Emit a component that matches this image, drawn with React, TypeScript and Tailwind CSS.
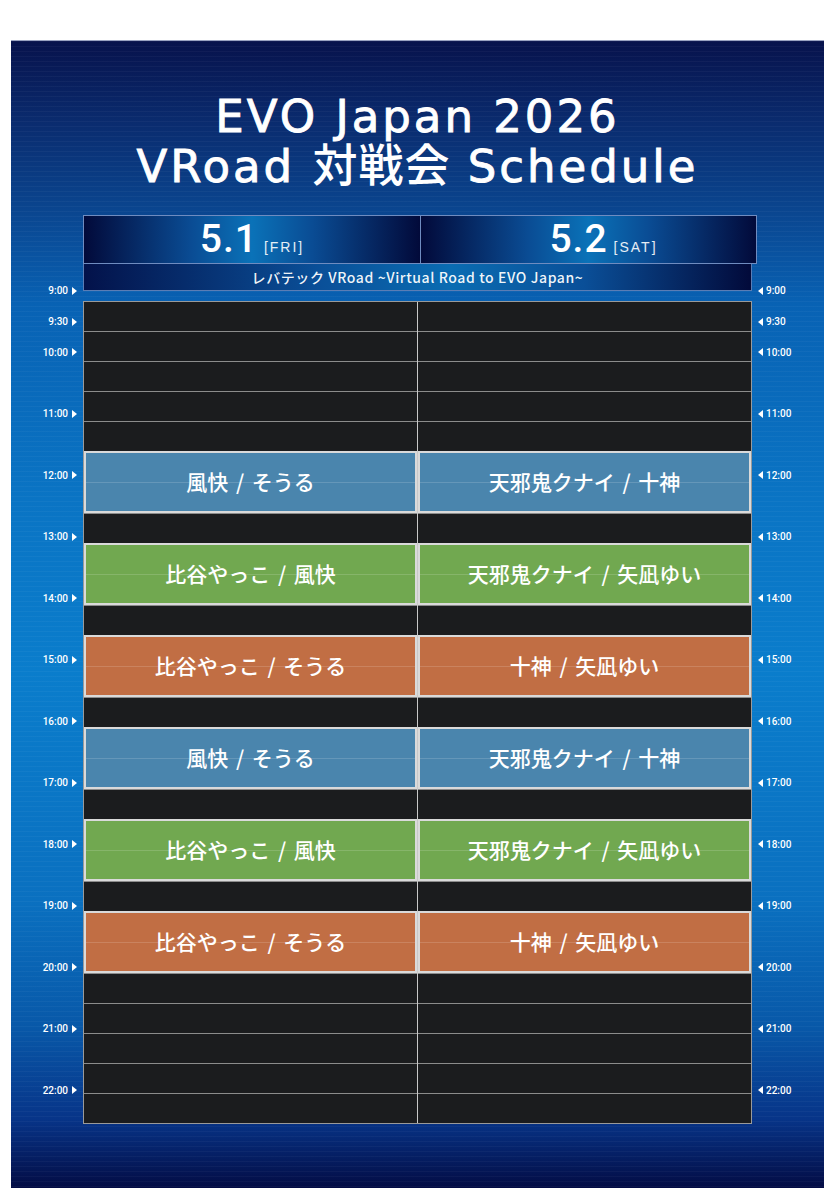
type Slot = { kind: "empty" } | { kind: "event"; tone: "blue" | "green" | "orange"; label: string };

const empty: Slot = { kind: "empty" };
const ev = (tone: "blue" | "green" | "orange", label: string): Slot => ({ kind: "event", tone, label });

const FRIDAY: Slot[] = [
  empty, empty, empty, empty, empty,
  ev("blue", "風快 / そうる"), empty,
  ev("green", "比谷やっこ / 風快"), empty,
  ev("orange", "比谷やっこ / そうる"), empty,
  ev("blue", "風快 / そうる"), empty,
  ev("green", "比谷やっこ / 風快"), empty,
  ev("orange", "比谷やっこ / そうる"),
  empty, empty, empty, empty, empty,
];

const SATURDAY: Slot[] = [
  empty, empty, empty, empty, empty,
  ev("blue", "天邪鬼クナイ / 十神"), empty,
  ev("green", "天邪鬼クナイ / 矢凪ゆい"), empty,
  ev("orange", "十神 / 矢凪ゆい"), empty,
  ev("blue", "天邪鬼クナイ / 十神"), empty,
  ev("green", "天邪鬼クナイ / 矢凪ゆい"), empty,
  ev("orange", "十神 / 矢凪ゆい"),
  empty, empty, empty, empty, empty,
];

const TONE_BG = {
  blue: "bg-[#4a85ad]",
  green: "bg-[#71a850]",
  orange: "bg-[#c16e44]",
};

// half-hour marks 9:00 .. 22:00, only 9:30 gets a half-hour label
const MARKS = Array.from({ length: 27 }, (_, i) => {
  if (i === 1) return "9:30";
  if (i % 2 === 1) return "";
  return `${9 + i / 2}:00`;
});

const JP = "font-['Noto_Sans_CJK_JP',sans-serif]";

function TimeColumn({ side }: { side: "left" | "right" }) {
  return (
    <div className={`flex flex-col pt-[60.6px] ${side === "left" ? "w-[72px] items-end pr-[6px]" : "flex-1 items-start pl-[1px]"}`}>
      {MARKS.map((m, i) => (
        <div key={i} className="h-[30.75px] flex items-center">
          {m && side === "left" && (
            <div className="flex items-center gap-[4px]">
              <span className="text-[10px] font-medium text-white font-['Roboto',sans-serif]">{m}</span>
              <span className="w-0 h-0 border-y-[4px] border-y-transparent border-l-[5px] border-l-white" />
            </div>
          )}
          {m && side === "right" && (
            <div className="flex items-center gap-[3px]">
              <span className="w-0 h-0 border-y-[4px] border-y-transparent border-r-[5px] border-r-white" />
              <span className="text-[10px] font-medium text-white font-['Roboto',sans-serif]">{m}</span>
            </div>
          )}
        </div>
      ))}
    </div>
  );
}

function DayColumn({ slots, first }: { slots: Slot[]; first?: boolean }) {
  return (
    <div className={`flex flex-col ${first ? "w-[333px]" : "flex-1 border-l border-[#c8c8c8]"}`}>
      {slots.map((s, i) =>
        s.kind === "empty" ? (
          <div key={i} className={`flex-1 bg-[#1b1c1e] ${i > 0 ? "border-t border-[#8c8c8c]" : ""}`} />
        ) : (
          <div
            key={i}
            className={`relative flex-[2_2_0%] flex items-center justify-center border-2 border-[#dadada] ${TONE_BG[s.tone]}`}
          >
            <div className="absolute left-0 right-0 top-1/2 h-px bg-white/15" />
            <span className={`relative text-white text-[21px] font-medium [word-spacing:3px] ${JP}`}>{s.label}</span>
          </div>
        )
      )}
    </div>
  );
}

function DateCell({ day, dow, shift }: { day: string; dow: string; shift?: boolean }) {
  return (
    <div
      className={`w-1/2 flex items-center justify-center bg-[linear-gradient(to_right,#020a3a_0%,#0a4c94_32%,#0a72b8_50%,#0a4c94_68%,#020a3a_100%)] ${shift ? "border-l border-[#6f8cc0]" : ""}`}
    >
      <div className={`flex items-baseline gap-[6px] ${shift ? "pl-[30px]" : ""}`}>
        <span className="text-white text-[39px] leading-none font-medium font-['Roboto',sans-serif] tracking-[1px]">{day}</span>
        <span className="text-white/90 text-[14px] leading-none tracking-[2px] font-['Liberation_Sans',sans-serif]">[{dow}]</span>
      </div>
    </div>
  );
}

export default function App() {
  return (
    <div className="w-[835px] h-[1200px] bg-white pt-[40px] pl-[11px]">
      <div className="w-[813px] h-[1148px] border-t border-[#9aa3c2] flex flex-col items-center pt-[51px] bg-[repeating-linear-gradient(to_bottom,rgba(255,255,255,0.035)_0px,rgba(255,255,255,0.035)_1px,transparent_1px,transparent_5px),linear-gradient(to_bottom,#07124c_0%,#0a2b6e_7%,#0a4690_15%,#0862b4_23%,#0a74c4_40%,#0a7dcc_55%,#0a70c0_75%,#0858a8_86%,#073488_94%,#030c44_100%)]">
        <div className="text-white text-[45px] tracking-[3px] text-center [-webkit-text-stroke:0.9px_white] font-['DejaVu_Sans','Noto_Sans_CJK_JP',sans-serif]">
          <div className="h-[50px] leading-[50px]">EVO Japan 2026</div>
          <div className="h-[50px] leading-[50px]">
            VRoad <span className="font-medium tracking-[1px] [-webkit-text-stroke:0px]">対戦会</span> Schedule
          </div>
        </div>

        <div className="mt-[23px] flex w-full">
          <TimeColumn side="left" />

          <div className="w-[674px] flex flex-col">
            <div className="h-[49px] flex border border-[#6f8cc0]">
              <DateCell day="5.1" dow="FRI" />
              <DateCell day="5.2" dow="SAT" shift />
            </div>
            <div className="w-[669px] h-[27px] flex items-center justify-center border border-t-0 border-[#5a7db5] bg-[linear-gradient(to_right,#03124a_0%,#0a4f98_35%,#0a6cb2_55%,#0a4f98_75%,#020a3a_100%)]">
              <span className={`text-white/95 text-[14px] font-medium tracking-[0.6px] ${JP}`}>レバテック VRoad ~Virtual Road to EVO Japan~</span>
            </div>
            <div className="mt-[10px] w-[669px] h-[823px] flex border border-[#9a9a9a]">
              <DayColumn slots={FRIDAY} first />
              <DayColumn slots={SATURDAY} />
            </div>
          </div>

          <TimeColumn side="right" />
        </div>
      </div>
    </div>
  );
}
